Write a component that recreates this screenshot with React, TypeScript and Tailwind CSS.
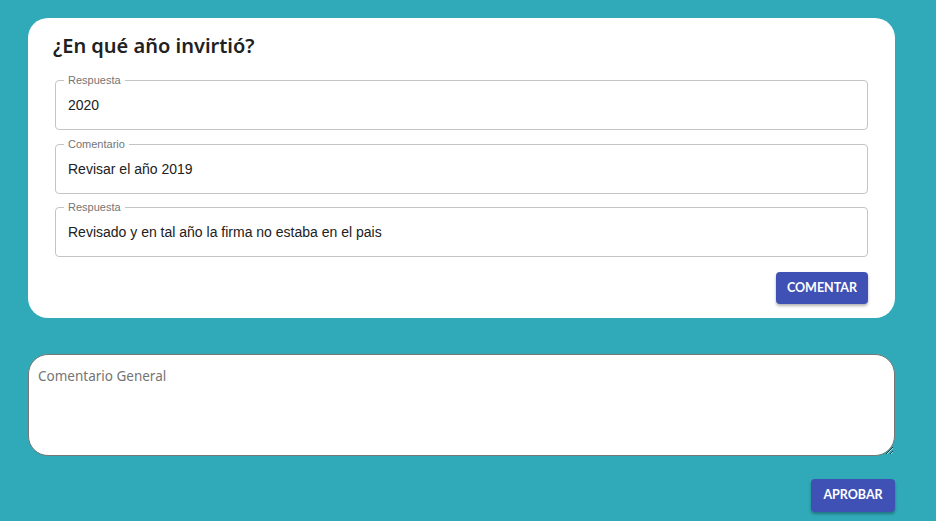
import React from "react";

function Field({ label, value }: { label: string; value: string }) {
  return (
    <div className="relative h-[50px] rounded-[4px] border border-[#c4c4c4] flex items-center px-[12px]">
      <span className="absolute -top-[7px] left-[8px] bg-white px-[4px] text-[11px] leading-[12px] text-[#757575] [font-family:'Liberation_Sans',Arial,sans-serif]">
        {label}
      </span>
      <span className="text-[14px] text-[#212121] [font-family:'Liberation_Sans',Arial,sans-serif]">{value}</span>
    </div>
  );
}

export default function App() {
  return (
    <div className="min-h-screen bg-[#30a9b8] pt-[18px] pl-[28px]">
      <div className="w-[867px] flex flex-col">
        <div className="bg-white rounded-[20px] px-[27px] pt-[14px] pb-[14px] flex flex-col">
          <h1 className="-ml-[2px] text-[20px] leading-[28px] font-semibold text-[#212121] mb-[20px] [font-family:'Noto_Sans',sans-serif]">
            ¿En qué año invirtió?
          </h1>
          <div className="flex flex-col">
            <Field label="Respuesta" value="2020" />
            <div className="h-[14px]" />
            <Field label="Comentario" value="Revisar el año 2019" />
            <div className="h-[13px]" />
            <Field label="Respuesta" value="Revisado y en tal año la firma no estaba en el pais" />
          </div>
          <div className="flex justify-end mt-[15px]">
            <button className="h-[32px] w-[92px] rounded-[4px] bg-[#3f51b5] text-white text-[12.5px] font-bold uppercase shadow-[0_2px_3px_rgba(0,0,0,0.3)] [font-family:Lato,sans-serif]">
              Comentar
            </button>
          </div>
        </div>
        <textarea
          placeholder="Comentario General"
          className="mt-[36px] h-[102px] w-full rounded-[20px] border border-[#767676] bg-white px-[9px] pt-[11px] text-[13.5px] leading-[20px] text-[#212121] placeholder:text-[#757575] outline-none [font-family:'Noto_Sans',sans-serif]"
        />
        <div className="flex justify-end mt-[23px]">
          <button className="h-[33px] w-[84px] rounded-[4px] bg-[#3f51b5] text-white text-[12.5px] font-bold uppercase shadow-[0_2px_3px_rgba(0,0,0,0.3)] [font-family:Lato,sans-serif]">
            Aprobar
          </button>
        </div>
      </div>
    </div>
  );
}
